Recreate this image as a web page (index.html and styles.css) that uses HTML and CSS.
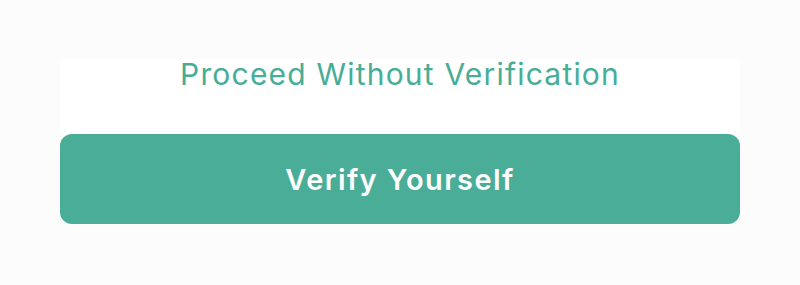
FILE: index.html
```html
<!DOCTYPE html>
<html>
<head>
<meta charset="utf-8">
<link rel="stylesheet" href="styles.css">
</head>
<body>
<div class="page">
  <div class="card">
    <a class="skip" href="#">Proceed Without Verification</a>
  </div>
  <button class="verify">Verify Yourself</button>
</div>
</body>
</html>
```
FILE: styles.css
```css
html, body {
  margin: 0;
  padding: 0;
  background: #fcfcfc;
  font-family: Inter, sans-serif;
}
.page {
  width: 680px;
  margin: 0 auto;
  padding-top: 59px;
  display: flex;
  flex-direction: column;
}
.card {
  background: #ffffff;
  height: 75px;
  display: flex;
  justify-content: center;
}
.skip {
  color: #47ad96;
  text-decoration: none;
  font-size: 30px;
  font-weight: 400;
  letter-spacing: 1.2px;
  line-height: 30px;
}
.verify {
  height: 90px;
  border: none;
  border-radius: 12px;
  background: #49ad97;
  color: #ffffff;
  font-family: Inter, sans-serif;
  font-size: 29px;
  font-weight: 600;
  letter-spacing: 1.4px;
  padding: 0;
}
```
